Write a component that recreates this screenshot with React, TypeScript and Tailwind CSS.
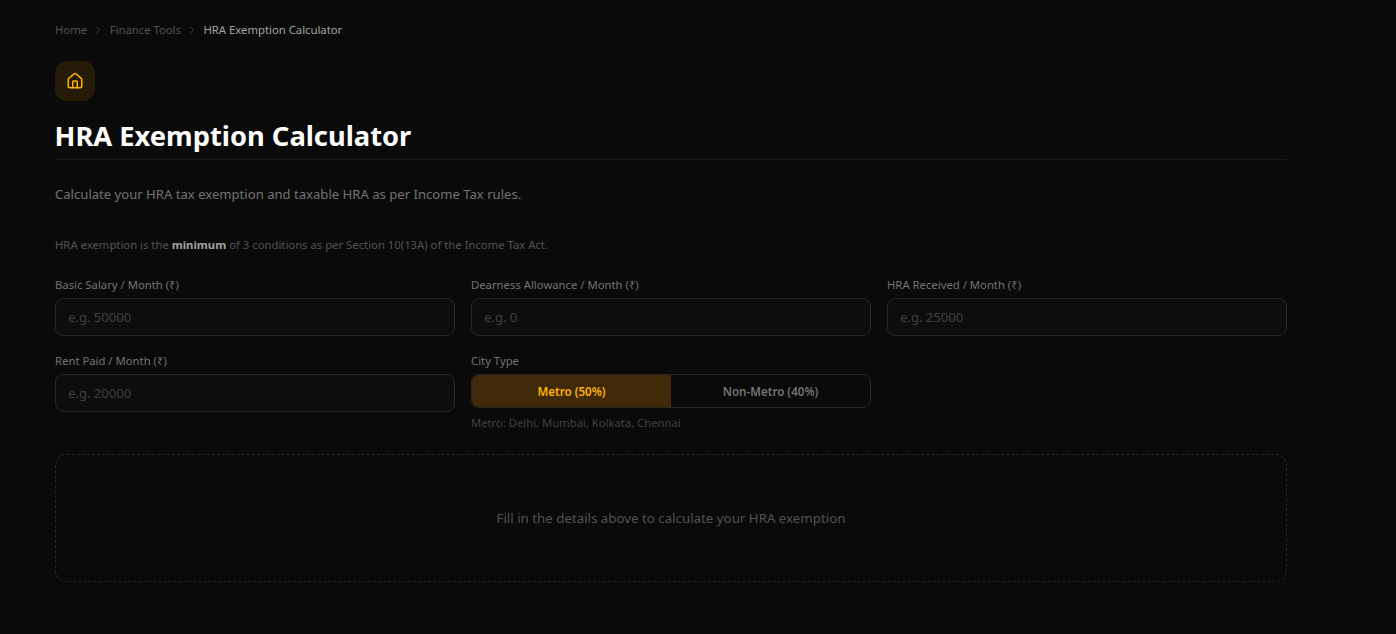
import React from "react";
import { ChevronRight, House } from "lucide-react";

const fieldClass =
  "w-full h-[38px] px-3 rounded-lg border border-[#262626] bg-[#0d0d0d] text-[13.1px] text-white outline-none placeholder:text-[#404040]";

const Field = ({ label, placeholder }: { label: string; placeholder: string }) => (
  <div>
    <label className="block h-[16px] mb-[5px] text-[11.3px] leading-[16px] text-[#737373]">{label}</label>
    <input className={fieldClass} placeholder={placeholder} />
  </div>
);

const App = () => {
  return (
    <div className="min-h-[634px] bg-[#0a0a0a] px-[55px] pt-[21px] font-['Noto_Sans','Open_Sans',sans-serif]">
      <div className="w-[1232px]">
        {/* Breadcrumb */}
        <nav className="flex items-center h-[18px] text-[11.3px] text-[#525252]">
          <span>Home</span>
          <ChevronRight size={12} className="mx-[5.25px] text-[#404040]" />
          <span>Finance Tools</span>
          <ChevronRight size={12} className="mx-[5.25px] text-[#404040]" />
          <span className="text-[#a3a3a3]">HRA Exemption Calculator</span>
        </nav>

        {/* Header */}
        <div className="mt-[22px] flex items-center justify-center w-10 h-10 rounded-xl bg-[#261a08]">
          <House size={18} className="text-[#ffb300]" />
        </div>
        <h1 className="mt-[13px] h-[45px] -ml-[0.5px] text-[27.3px] leading-[44px] font-bold text-white">
          HRA Exemption Calculator
        </h1>
        <div className="h-px bg-[#1a1a1a]" />
        <p className="mt-[24px] text-[13.1px] leading-[20px] text-[#737373]">
          Calculate your HRA tax exemption and taxable HRA as per Income Tax rules.
        </p>
        <p className="mt-[33px] text-[11.3px] leading-[16px] text-[#525252]">
          HRA exemption is the <strong className="font-bold text-[#a3a3a3]">minimum</strong> of 3 conditions as per
          Section 10(13A) of the Income Tax Act.
        </p>

        {/* Form */}
        <div className="mt-[24px] grid grid-cols-3 gap-x-4 gap-y-[17px]">
          <Field label="Basic Salary / Month (₹)" placeholder="e.g. 50000" />
          <Field label="Dearness Allowance / Month (₹)" placeholder="e.g. 0" />
          <Field label="HRA Received / Month (₹)" placeholder="e.g. 25000" />
          <Field label="Rent Paid / Month (₹)" placeholder="e.g. 20000" />
          <div>
            <label className="block h-[16px] mb-[5px] text-[11.3px] leading-[16px] text-[#737373]">City Type</label>
            <div className="flex h-[34px] rounded-lg border border-[#262626] overflow-hidden text-[11.6px] font-semibold">
              <button className="flex-1 pt-px bg-[#3f2908] text-[#ffb300]">Metro (50%)</button>
              <button className="flex-1 pt-px text-[#737373]">Non-Metro (40%)</button>
            </div>
            <p className="mt-[7px] text-[11.25px] leading-[16px] text-[#404040]">Metro: Delhi, Mumbai, Kolkata, Chennai</p>
          </div>
        </div>

        {/* Empty result */}
        <div className="mt-[23px] h-[128px] pt-px flex items-center justify-center rounded-xl border border-dashed border-[#262626] text-[13.3px] text-[#525252]">
          Fill in the details above to calculate your HRA exemption
        </div>
      </div>
    </div>
  );
};

export default App;
